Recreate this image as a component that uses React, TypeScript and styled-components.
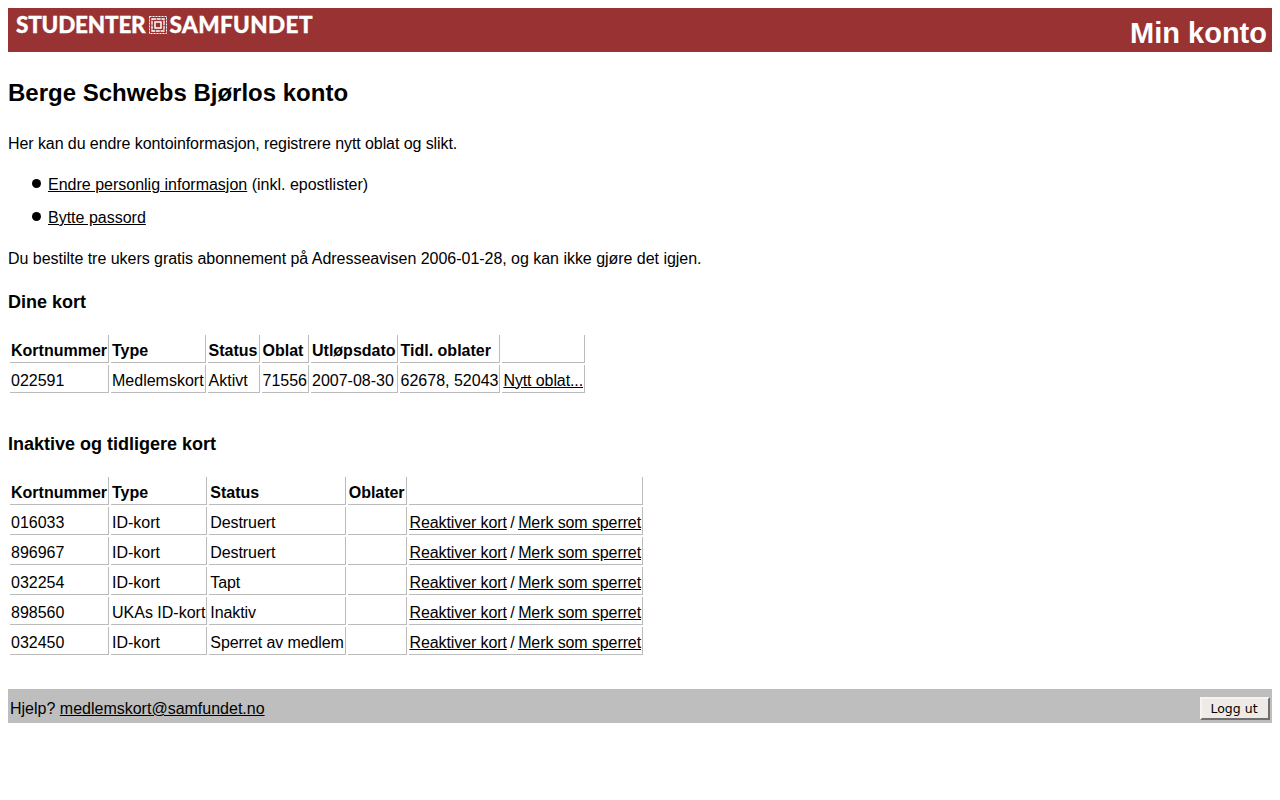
import React from 'react';
import styled, { createGlobalStyle } from 'styled-components';

const GlobalStyle = createGlobalStyle`
  body {
    margin: 8px;
    background: #fff;
    color: #000;
    font-family: "Liberation Sans", Arial, sans-serif;
    font-size: 16px;
  }
`;

const Header = styled.header`
  height: 44px;
  background: #993333;
  display: flex;
  justify-content: space-between;
  color: #fff;
`;

const Logo = styled.div`
  display: flex;
  align-items: center;
  gap: 3px;
  height: 18px;
  margin: 8px 0 0 8px;
  font-family: Lato, sans-serif;
  font-weight: 900;
  font-size: 22.5px;
  line-height: 18px;
  -webkit-text-stroke: 0.3px #fff;
`;

const LogoWord = styled.span<{ $spacing: number }>`
  letter-spacing: ${(p) => p.$spacing}px;
`;

const PageName = styled.div`
  font-size: 29px;
  font-weight: bold;
  line-height: 33px;
  padding: 9px 5px 0 0;
`;

const Title = styled.h1`
  font-size: 24px;
  line-height: 28px;
  margin: 27px 0 28px;
`;

const Text = styled.p<{ $spacing: number }>`
  margin: 0 0 16px;
  line-height: 18px;
  letter-spacing: ${(p) => p.$spacing}px;
`;

const Links = styled.ul`
  list-style: none;
  margin: 23px 0;
  padding-left: 40px;
`;

const LinkItem = styled.li`
  position: relative;
  line-height: 18px;
  margin-bottom: 15px;

  &:last-child {
    margin-bottom: 0;
  }

  &::before {
    content: '';
    position: absolute;
    left: -16px;
    top: 3px;
    width: 9px;
    height: 9px;
    border-radius: 50%;
    background: #000;
  }
`;

const Link = styled.a`
  color: #000;
  text-decoration: underline;
`;

const ActionLink = styled(Link)`
  letter-spacing: -0.1px;
`;

const SubTitle = styled.h2<{ $top: number }>`
  font-size: 18px;
  line-height: 21px;
  margin: ${(p) => p.$top}px 0 20px;
`;

const Table = styled.table`
  border-collapse: separate;
  border-spacing: 2px;
  margin-bottom: 32px;
`;

const Th = styled.th<{ $spacing?: number }>`
  text-align: left;
  padding: 6px 1px 2px 1px;
  height: 28px;
  box-sizing: border-box;
  font-size: 16px;
  letter-spacing: ${(p) => p.$spacing ?? 0}px;
  border-right: 1px solid #bbb;
  border-bottom: 1px solid #bbb;
`;

const Td = styled.td<{ $spacing?: number }>`
  padding: 6px 1px 2px 1px;
  height: 28px;
  box-sizing: border-box;
  white-space: nowrap;
  letter-spacing: ${(p) => p.$spacing ?? 0}px;
  border-right: 1px solid #bbb;
  border-bottom: 1px solid #bbb;
`;

const Separator = styled.span`
  word-spacing: -1px;
`;

const Footer = styled.footer`
  height: 34px;
  box-sizing: border-box;
  background: #bebebe;
  display: flex;
  align-items: flex-end;
  justify-content: space-between;
  padding: 0 2px 3px;
`;

const HelpText = styled.span`
  line-height: 18px;
  padding-bottom: 2px;
`;

const LogoutButton = styled.button`
  width: 70px;
  height: 23px;
  padding: 0 2px 0 0;
  background: #eeeae6;
  color: #000;
  font-family: "DejaVu Sans", sans-serif;
  font-size: 12.5px;
  border: 2px solid;
  border-color: #f6f4f2 #6f6f6f #6f6f6f #f6f4f2;
`;

const LogoMark = () => (
  <svg width="18" height="18" viewBox="0 0 18 18" fill="none" stroke="#fff" strokeWidth="1">
    <rect x="0.5" y="0.5" width="17" height="17" strokeDasharray="2 1" />
    <rect x="3" y="3" width="12" height="12" strokeWidth="1.3" strokeDasharray="4 0.7" />
    <rect x="6" y="6" width="6" height="6" strokeWidth="1.5" />
  </svg>
);

const activeRows = [
  { number: '022591', type: 'Medlemskort', status: 'Aktivt', oblat: '71556', expires: '2007-08-30', old: '62678, 52043' },
];

const oldRows = [
  { number: '016033', type: 'ID-kort', status: 'Destruert' },
  { number: '896967', type: 'ID-kort', status: 'Destruert' },
  { number: '032254', type: 'ID-kort', status: 'Tapt' },
  { number: '898560', type: 'UKAs ID-kort', status: 'Inaktiv' },
  { number: '032450', type: 'ID-kort', status: 'Sperret av medlem' },
];

export default function App() {
  return (
    <>
      <GlobalStyle />
      <Header>
        <Logo>
          <LogoWord $spacing={-0.2}>STUDENTER</LogoWord>
          <LogoMark />
          <LogoWord $spacing={0.4}>SAMFUNDET</LogoWord>
        </Logo>
        <PageName>Min konto</PageName>
      </Header>

      <Title>Berge Schwebs Bjørlos konto</Title>
      <Text $spacing={-0.08}>Her kan du endre kontoinformasjon, registrere nytt oblat og slikt.</Text>
      <Links>
        <LinkItem>
          <Link href="#">Endre personlig informasjon</Link> (inkl. epostlister)
        </LinkItem>
        <LinkItem>
          <Link href="#">Bytte passord</Link>
        </LinkItem>
      </Links>
      <Text $spacing={-0.03}>Du bestilte tre ukers gratis abonnement på Adresseavisen 2006-01-28, og kan ikke gjøre det igjen.</Text>

      <SubTitle $top={24}>Dine kort</SubTitle>
      <Table>
        <thead>
          <tr>
            <Th>Kortnummer</Th>
            <Th>Type</Th>
            <Th>Status</Th>
            <Th>Oblat</Th>
            <Th>Utløpsdato</Th>
            <Th>Tidl. oblater</Th>
            <Th />
          </tr>
        </thead>
        <tbody>
          {activeRows.map((row) => (
            <tr key={row.number}>
              <Td>{row.number}</Td>
              <Td>{row.type}</Td>
              <Td>{row.status}</Td>
              <Td>{row.oblat}</Td>
              <Td>{row.expires}</Td>
              <Td>{row.old}</Td>
              <Td>
                <ActionLink href="#">Nytt oblat...</ActionLink>
              </Td>
            </tr>
          ))}
        </tbody>
      </Table>

      <SubTitle $top={39}>Inaktive og tidligere kort</SubTitle>
      <Table>
        <thead>
          <tr>
            <Th>Kortnummer</Th>
            <Th>Type</Th>
            <Th>Status</Th>
            <Th $spacing={-0.05}>Oblater</Th>
            <Th />
          </tr>
        </thead>
        <tbody>
          {oldRows.map((row) => (
            <tr key={row.number}>
              <Td>{row.number}</Td>
              <Td>{row.type}</Td>
              <Td $spacing={-0.1}>{row.status}</Td>
              <Td />
              <Td>
                <ActionLink href="#">Reaktiver kort</ActionLink>
                <Separator> / </Separator>
                <ActionLink href="#">Merk som sperret</ActionLink>
              </Td>
            </tr>
          ))}
        </tbody>
      </Table>

      <Footer>
        <HelpText>
          Hjelp? <Link href="#">medlemskort@samfundet.no</Link>
        </HelpText>
        <LogoutButton type="button">Logg ut</LogoutButton>
      </Footer>
    </>
  );
}
